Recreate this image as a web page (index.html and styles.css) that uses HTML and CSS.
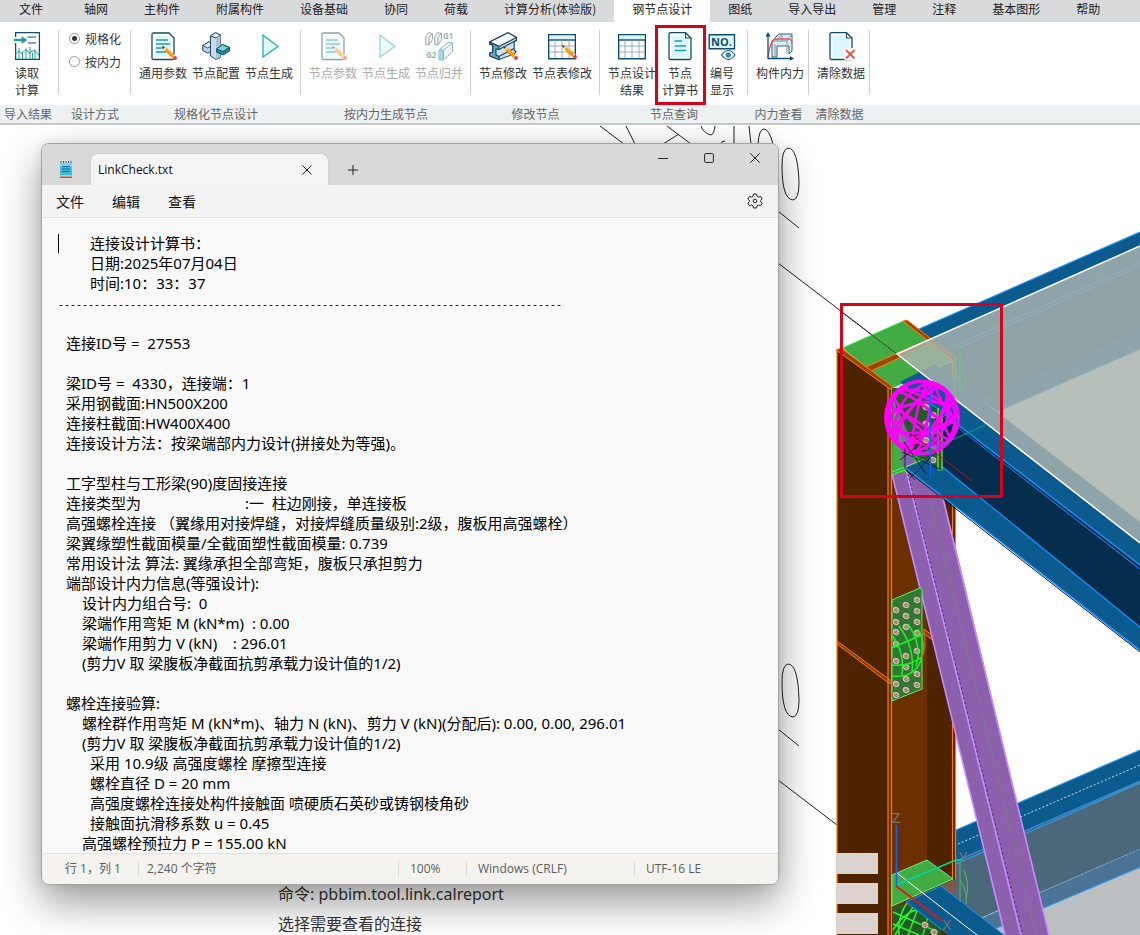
FILE: index.html
```html
<!DOCTYPE html>
<html lang="zh-CN">
<head>
<meta charset="utf-8">
<title>钢节点设计</title>
<link rel="stylesheet" href="styles.css">
</head>
<body>
<svg class="defs" aria-hidden="true">
  <defs>
    <g id="pencil">
      <path d="M12 15l4 1 8.500 7.500-2.700 3.200-8-8z" fill="#ffa31a"/>
      <path d="M14.500 18.500l7.500 7" stroke="#e07f00" stroke-width="1"/>
      <path d="M11 14l5 1.700-2.700 3.300z" fill="#f6d9ae"/>
      <path d="M11 14l3 1-1.800 2z" fill="#5a2a10"/>
      <path d="M23.500 22.500l-2.500 3 1 1 2.500-3z" fill="#e8eef2"/>
      <circle cx="24" cy="26" r="2" fill="#f0403c"/>
    </g>
    <g id="sheet">
      <path d="M3 2.500q0-1.500 1.500-1.500H20l5 5v20q0 1.500-1.500 1.500H4.500Q3 27.500 3 26z" fill="#fff" stroke="#0f4c6e" stroke-width="1.300"/>
      <path d="M6 4h12l4.500 4v17H6z" fill="#dcf7f9"/>
      <path d="M7 8h12M7 12h14M7 16h7M7 20h10" stroke="#1d9da6" stroke-width="1.300"/>
    </g>
    <g id="grid-sheet">
      <path d="M.7 2.700h26.600v24H.7z" fill="#fff" stroke="#0f4c6e" stroke-width="1.400"/>
      <path d="M1.500 3.500h25v4h-25z" fill="#d5f5f8"/>
      <path d="M.7 8h26.600" stroke="#0f4c6e" stroke-width="1.400"/>
      <path d="M7 8v18M14 8v18M21 8v18M1 14h26M1 20h26" stroke="#7f9db3" stroke-width=".8"/>
    </g>
    <g id="bolt">
      <ellipse rx="4" ry="3.600" fill="#c9bf9e" stroke="#2b3a22" stroke-width=".6" transform="rotate(25)"/>
      <path d="M-1.500 0q1-2 2.500-.7t0 2.200q-2 0-2.500-1.500" fill="none" stroke="#5d5644" stroke-width=".8"/>
    </g>
  </defs>
</svg>

<div class="app">
  <header>
    <nav class="tabs">
      <a class="tab tab-file" href="#">文件</a>
      <a class="tab" href="#">轴网</a>
      <a class="tab" href="#">主构件</a>
      <a class="tab" href="#">附属构件</a>
      <a class="tab" href="#">设备基础</a>
      <a class="tab" href="#">协同</a>
      <a class="tab" href="#">荷载</a>
      <a class="tab" href="#">计算分析(体验版)</a>
      <a class="tab active" href="#" aria-current="page">钢节点设计</a>
      <a class="tab" href="#">图纸</a>
      <a class="tab" href="#">导入导出</a>
      <a class="tab" href="#">管理</a>
      <a class="tab" href="#">注释</a>
      <a class="tab" href="#">基本图形</a>
      <a class="tab" href="#">帮助</a>
    </nav>

    <div class="ribbon">
      <section class="group group-import">
        <div class="tools">
          <button class="tool">
            <svg class="icon" viewBox="0 0 28 28"><path d="M2.600 5V.7h23.800v26.600H2.600V11" fill="#fff" stroke="#0f4c6e" stroke-width="1.300"/><path d="M1 8h8" stroke="#1d9da6" stroke-width="2.400"/><path d="M8.500 4.200l6 3.800-6 3.800z" fill="#1d9da6"/><path d="M14.500 5H23M15 11h8" stroke="#0f4c6e" stroke-width="1.200"/><path d="M2.600 22.500c2-4 5-4 6.400-.5 1.500-5 6-5 7.500 0 1.500-3.500 5.500-4.500 7.500-.5l2 1.500M6 16v11M13 16v11M17 15v12M22 17v10M9.500 20v7M19.500 21v6" fill="none" stroke="#1d9da6" stroke-width="1"/></svg>
            <span>读取<br>计算</span>
          </button>
        </div>
        <h2>导入结果</h2>
      </section>

      <section class="group">
        <div class="modes">
          <label><input type="radio" name="mode" checked>规格化</label>
          <label><input type="radio" name="mode">按内力</label>
        </div>
        <h2>设计方式</h2>
      </section>

      <section class="group">
        <div class="tools">
          <button class="tool"><svg class="icon" viewBox="0 0 28 28"><use href="#sheet"/><use href="#pencil" x="2"/></svg><span>通用参数</span></button>
          <button class="tool"><svg class="icon" viewBox="0 0 28 28" stroke="#2a4c70" stroke-width="1" stroke-linejoin="round"><path d="M.7 13.500l6-3.500 5 2v6l-6 3-5-2.500z" fill="#bcd3e4"/><path d="M.7 13.500l5 2.500 6-4-5-2z" fill="#eaf3f9"/><path d="M8.500 4l5-3.300L18.500 3v22.500l-4.500 2-5.500-3.500z" fill="#c7dbe8"/><path d="M8.500 4l5-3.300L18.500 3l-4.500 3z" fill="#e6f2f9"/><path d="M14 6.500v20.500l4.500-2V3.500z" fill="#a8c4d6" stroke="none"/><path d="M14.500 17l6-4.500 7 3V19l-6.500 4-6.500-3z" fill="#168e93" stroke="#0e5466"/><path d="M14.500 17l6-4.500 7 3-6.500 4z" fill="#7cd0d2" stroke="#0e5466"/></svg><span>节点配置</span></button>
          <button class="tool"><svg class="icon" viewBox="0 0 28 28"><path d="M8 3l15 11.500L8 25z" fill="#dff8fa" stroke="#2aa5b3" stroke-width="1.200"/></svg><span>节点生成</span></button>
        </div>
        <h2>规格化节点设计</h2>
      </section>

      <section class="group">
        <div class="tools">
          <button class="tool" disabled><svg class="icon" viewBox="0 0 28 28"><use href="#sheet"/><use href="#pencil" x="2"/></svg><span>节点参数</span></button>
          <button class="tool" disabled><svg class="icon" viewBox="0 0 28 28"><path d="M8 3l15 11.500L8 25z" fill="#dff8fa" stroke="#2aa5b3" stroke-width="1.200"/></svg><span>节点生成</span></button>
          <button class="tool" disabled><svg class="icon" viewBox="0 0 28 28"><g stroke="#456" stroke-width="1" stroke-linejoin="round"><path d="M.7 4.500L3.500.7l4 .8v6l-3.500 5.500-3.300-.5z" fill="#dde7ec"/><path d="M9.700 4.500L12.500.7l4 .8v6l-3.500 5.500-3.300-.5z" fill="#dde7ec"/><path d="M4 5l3.500-3.500M4 5v8M13 5l3.500-3.500M13 5v8" fill="none"/><path d="M14 18L23 10.500l4.500.5v8.500L18.500 28H14z" fill="#e1f3f5" stroke="#246a78"/><path d="M14 18h4.500v9.500H14z" fill="#39b9bc" stroke="none"/><path d="M14 18h4.500L27.500 11M18.500 18v9.500" fill="none" stroke="#246a78"/></g><text x="18" y="7" class="icon-tag">G1</text><text x="1" y="26" class="icon-tag">G2</text></svg><span>节点归并</span></button>
        </div>
        <h2>按内力生成节点</h2>
      </section>

      <section class="group">
        <div class="tools">
          <button class="tool"><svg class="icon" viewBox="0 0 28 28"><g stroke="#16405c" stroke-width="1.100" stroke-linejoin="round"><path d="M.6 10L19 .7l8.400 4.800v3l-2.200 1v9l2 1-2 2.500L10 27.500.8 24v-3l3-1v-7l-3-1z" fill="#cfe0ea"/><path d="M.6 10L19 .7l8.400 4.800L10 14.500z" fill="#f2fafd"/><path d="M.6 10l9.400 4.500v3l-3-.7v6.200l3 1.500v3L.8 24v-3l3-1v-7l-3.200-1z" fill="#5fa9b8"/><path d="M10 17.500l17-9M10 24.500l15-8" fill="none"/></g><use href="#pencil" x="3"/></svg><span>节点修改</span></button>
          <button class="tool"><svg class="icon" viewBox="0 0 28 28"><use href="#grid-sheet"/><use href="#pencil" x="3" y="-1"/></svg><span>节点表修改</span></button>
        </div>
        <h2>修改节点</h2>
      </section>

      <section class="group group-query">
        <div class="tools">
          <button class="tool"><svg class="icon" viewBox="0 0 28 28"><use href="#grid-sheet"/></svg><span>节点设计<br>结果</span></button>
          <button class="tool marked"><svg class="icon" viewBox="0 0 28 28"><path d="M3 2.500Q3 .7 4.500.7h15L25 6v20q0 1.500-1.500 1.500h-19Q3 27.500 3 26z" fill="#fff" stroke="#0f4c6e" stroke-width="1.300"/><path d="M5.500 3.500h12.500v4h4.500V25h-17z" fill="#dcf7f9"/><path d="M19.500.7V6H25" fill="none" stroke="#0f4c6e" stroke-width="1.200"/><path d="M8.500 9H16M9 14h11M9 18.500h11" stroke="#1d9da6" stroke-width="1.300"/></svg><span>节点<br>计算书</span></button>
          <button class="tool"><svg class="icon" viewBox="0 0 28 28"><path d="M1.200 2.700h25.300v14H1.200z" fill="#dff8fa" stroke="#0f4c6e" stroke-width="1.400"/><text x="3" y="14" class="icon-no">NO.</text><path d="M13.500 23q7-9 13.500 0-6.500 9-13.500 0z" fill="#fff" stroke="#0f6b84" stroke-width="1.200"/><circle cx="20.300" cy="23" r="2.300" fill="#1d9da6" stroke="#0f4c6e" stroke-width=".6"/></svg><span>编号<br>显示</span></button>
        </div>
        <h2>节点查询</h2>
      </section>

      <section class="group group-single">
        <div class="tools">
          <button class="tool"><svg class="icon" viewBox="0 0 28 28"><path d="M6 9l7-7h13v17l-3 3v-8H11v11H6z" fill="#dcecf3" stroke="#34607c" stroke-width="1"/><path d="M6 9h15l5-7M21 9v13M11 9l5-7v7M9 12v12" fill="none" stroke="#6990a8" stroke-width=".9"/><path d="M2 25C4 12 6 7 10 7h13q3 1 3 5" fill="none" stroke="#ef5350" stroke-width="1.300"/><path d="M2 27V2.500M2 26.500h24" fill="none" stroke="#0f4c6e" stroke-width="1.300"/><path d="M-.5 4.500L2 0l2.500 4.500zM24 24l4 2.500-4 2.200z" fill="#0f4c6e"/></svg><span>构件内力</span></button>
        </div>
        <h2>内力查看</h2>
      </section>

      <section class="group group-single">
        <div class="tools">
          <button class="tool"><svg class="icon" viewBox="0 0 28 28"><path d="M3 2.500Q3 .7 4.500.7h15L25 6v20q0 1.500-1.500 1.500h-19Q3 27.500 3 26z" fill="#fff" stroke="#0f4c6e" stroke-width="1.300"/><path d="M5.500 3.500h12.500v4h4.500V25h-17z" fill="#dcf7f9"/><path d="M19.500.7V6H25" fill="none" stroke="#0f4c6e" stroke-width="1.200"/><path d="M17.500 16h11v12h-11z" fill="#fff"/><path d="M19 18l8.500 8.500M27.500 18L19 26.500" stroke="#ef5350" stroke-width="2"/></svg><span>清除数据</span></button>
        </div>
        <h2>清除数据</h2>
      </section>
      <div class="group-rest"></div>
    </div>
  </header>

  <main class="workspace">
    <svg class="scene" viewBox="0 125 1140 810" preserveAspectRatio="xMaxYMin slice" role="img" aria-label="节点三维模型">
      <g fill="none" stroke="#222" stroke-width="1">
        <path d="M600 126l24 18M626 126l9 18M667 126l24 18M663 144l16-10M701 126q2 7 10 9 3-1 4-9M734 126v18M749 126l2 18M758 144q1-15 6-15 5 0 9 15M721 144q0-3 4-3"/>
        <path d="M788 148q-6 1-6 18 0 33 11 34 6-1 6-17-1-35-11-35zM788 664q-6 1-6 18 0 34 11 35 6-1 6-17-1-36-11-36z"/>
        <path d="M778 211l21 17M778 263l119 91M778 729l21 17M778 780l59 45"/>
      </g>

      <!-- rear beam at the upper joint -->
      <path d="M919 329l221-97v117l-142 63-63-48z" fill="#0b5b8f"/>
      <path d="M952 349l188-85v68l-160 70-38-30z" fill="#0a4d78"/>
      <path d="M919 329l221-97M952 347l188-84M954 350l186-84M998 411l142-62" fill="none" stroke="#1e90ee" stroke-width="1.200"/>
      <path d="M980 402l160-70" stroke="#1e90ee" stroke-dasharray="2 2"/>

      <!-- rear beam at the lower joint -->
      <path d="M980 935l160-69v69z" fill="#bcbfc2"/>
      <path d="M956 830l184-80v32l-184 81z" fill="#0b5b8f"/>
      <path d="M956 862l184-80v67l-157 68-27 18z" fill="#4b687a"/>
      <path d="M975 921l165-72v18l-160 68h-24z" fill="#4a7394"/>
      <path d="M956 830l184-80M956 864l184-81M956 861l184-80M980 935l160-68" fill="none" stroke="#3495dc" stroke-width="1.200"/>
      <path d="M958 844l182-79" stroke="#cfe0ea" stroke-dasharray="2 2"/>
      <path d="M975 921l165-72" stroke="#60a8dc" stroke-dasharray="2 2"/>
      <path d="M960 862v60M964 870q6 15 2 28M960 880q8 12 6 24" fill="none" stroke="#55b86a"/>

      <!-- column -->
      <path d="M837 350l53 39v546h-53z" fill="#4d2300"/>
      <path d="M888 388h5v547h-5z" fill="#6b3000"/>
      <path d="M892 388h35v547h-35z" fill="#6b2f00"/>
      <path d="M927 380h28v555h-28z" fill="#4d2300"/>
      <path d="M837 641l53 39v4l-53-40zM924 629l9 7v4l-9-6z" fill="#8a3c00" stroke="#ff7a0a"/>
      <path d="M837 350v585M888 388v547M891.500 388v547M952.500 362v573M955.500 362v573" stroke="#ff7a0a" stroke-width="1.200"/>
      <path d="M842 348l61-27 52 39-62 28z" fill="#43ab43" stroke="#66f56c"/>
      <path d="M866 367l59-26 4 3-58 27z" fill="#9b4400" stroke="#ff7a0a"/>
      <path d="M836 350l5-2 52 39-3 2z" fill="#a04200" stroke="#ff7a0a"/>
      <path d="M903 321l4-1 50 39-3 2z" fill="#a04200" stroke="#ff7a0a"/>
      <path d="M840 311l57 43" stroke="#222" stroke-dasharray="2 1"/>

      <!-- brace -->
      <path d="M892 388h50v88l-50-4z" fill="#235b24"/>
      <path d="M893 395l14 55 30 20-45 4z" fill="#43ab43"/>
      <path d="M897 400l12 22 6 46h-12z" fill="#8d60ad"/>
      <path d="M892 474l45-4 4 16 108 449h-44z" fill="#8d60ad"/>
      <path d="M892 474l113 461M906 470l115 465M937 474l112 461" fill="none" stroke="#c78bff" stroke-width="1.600"/>
      <path d="M908 474l115 461" stroke="#472768" stroke-dasharray="2 3"/>
      <path d="M924 474l112 461" stroke="#7c7c86" stroke-width="1.200" stroke-dasharray="4 1"/>
      <path d="M892 472l46-18M892 475l46-18" stroke="#5af461"/>

      <!-- front beam -->
      <path d="M900 382l35-18 205 158v45L958 427z" fill="#0b5b8f"/>
      <path d="M943 415l197 151v62L943 470z" fill="#052e4e"/>
      <path d="M906 468l24-11 210 170v24z" fill="#0b5b8f"/>
      <path d="M930 403l210 162M928 404l212 165M906 468l234 182M930 457l210 170" fill="none" stroke="#1e90ff" stroke-width="1.200"/>
      <path d="M906 470l234 182M930 405l210 163" fill="none" stroke="#031c32"/>
      <path d="M898 410l14-18 30 20v58l-4-2-20-12z" fill="#235b24"/>
      <path d="M938 408v61M942 410v60h-4" fill="none" stroke="#66f56c" stroke-width="1.200"/>
      <use href="#bolt" x="926" y="407"/><use href="#bolt" x="933" y="415"/><use href="#bolt" x="926" y="424"/><use href="#bolt" x="933" y="431"/><use href="#bolt" x="926" y="440"/><use href="#bolt" x="933" y="448"/><use href="#bolt" x="933" y="460"/>

      <!-- floor slab -->
      <path d="M897 354l243-108v297z" fill="#a9b3ae" fill-opacity=".84"/>
      <path d="M954 350v48M960 346v42M958 362q9 14 7 29M952 366q8 13 11 28" fill="none" stroke="#7cc48a" stroke-opacity=".6" stroke-width="1.400"/>
      <path d="M1140 246L897 354l243 189" fill="none" stroke="#fff" stroke-width="1.500"/>

      <!-- selected joint marker -->
      <g fill="none" stroke="#f0f" stroke-width="2.600">
        <circle cx="922" cy="417.500" r="36.500" stroke-width="3"/>
        <ellipse cx="922" cy="417.500" rx="33" ry="36"/>
        <ellipse cx="922" cy="417.500" rx="14" ry="36" transform="rotate(38 922 417.500)"/>
        <ellipse cx="922" cy="417.500" rx="24" ry="36" transform="rotate(28 922 417.500)"/>
        <ellipse cx="922" cy="417.500" rx="10" ry="36" transform="rotate(-48 922 417.500)"/>
        <ellipse cx="922" cy="417.500" rx="24" ry="36" transform="rotate(-58 922 417.500)"/>
        <ellipse cx="922" cy="417.500" rx="15" ry="35" transform="rotate(82 922 417.500)"/>
        <ellipse cx="922" cy="417.500" rx="6" ry="36" transform="rotate(12 922 417.500)"/>
        <path d="M889 405l58 34M902 388l44 18-20 44M891 431l42-48 18 38-50 24"/>
      </g>
      <path d="M904 442l22 32M900 460l20-16M910 478l20-20M902 452l40 18M905 448v20l10 12" fill="none" stroke="#111" stroke-width=".8"/>
      <path d="M904 462l81-37" stroke="#0b9b98"/>
      <path d="M910 433l62 48" stroke="#b3151b"/>
      <path d="M930.500 394v84" stroke="#0f62ff" stroke-width="1.300"/>

      <!-- gusset plate on the column -->
      <path d="M892 600l28-12 2 2v99l-30 12z" fill="#2f7a33" stroke="#5af461"/>
      <g>
        <use href="#bolt" x="896" y="610"/><use href="#bolt" x="906" y="605"/><use href="#bolt" x="917" y="600"/>
        <use href="#bolt" x="896" y="622"/><use href="#bolt" x="906" y="616"/><use href="#bolt" x="917" y="611"/>
        <use href="#bolt" x="896" y="632"/><use href="#bolt" x="906" y="627"/><use href="#bolt" x="917" y="622"/>
        <use href="#bolt" x="896" y="644"/><use href="#bolt" x="917" y="633"/><use href="#bolt" x="896" y="661"/>
        <use href="#bolt" x="906" y="656"/><use href="#bolt" x="917" y="651"/><use href="#bolt" x="906" y="667"/>
        <use href="#bolt" x="896" y="684"/><use href="#bolt" x="906" y="679"/><use href="#bolt" x="917" y="674"/>
        <use href="#bolt" x="896" y="695"/><use href="#bolt" x="906" y="690"/><use href="#bolt" x="917" y="685"/>
      </g>
      <path d="M892 635q13 18 10 40M899 626q16 22 13 46M908 624q15 22 8 42M892 648l32-14M892 665q18 2 31-9M892 676q24 3 30-19 4-14-4-28" fill="none" stroke="#22ee2c" stroke-width="1.500"/>
      <path d="M923 632q4 13-1 26" fill="none" stroke="#b96b00" stroke-width="1.500"/>

      <!-- lower joint -->
      <path d="M893 905h48v30h-48z" fill="#235b24"/>
      <path d="M893 912l45 20M895 935l20-31M893 924l26 11M907 903q-10 14-8 32M918 908l-10 27M930 908l-7 27M893 930q10-17 26-21" fill="none" stroke="#2ef034" stroke-width="1.500"/>
      <path d="M892 875l35-15 26 19-61 27z" fill="#43ab43" stroke="#66f56c"/>
      <use href="#bolt" x="925" y="925"/><use href="#bolt" x="934" y="932"/>
      <path d="M938 886l18-7v20z" fill="#7b5a4b"/>
      <path d="M906 902l35-16 63 49h-54z" fill="#0b5b8f"/>
      <path d="M941 886l63 49M906 902l43 33M906 902l35-16" fill="none" stroke="#1e90ff"/>
      <path d="M897 873l80 62" stroke="#fff" stroke-width="1"/>
      <path d="M896 885l60-25h7" fill="none" stroke="#00d7a5" stroke-width="1.600"/>
      <path d="M896 886l46 35" stroke="#f01010" stroke-width="1.600"/>
      <path d="M896.500 825v61" stroke="#0f62ff" stroke-width="1.600"/>
      <text class="axis" x="896" y="823">Z</text><text class="axis" x="963" y="862">Y</text><text class="axis" x="947" y="930">X</text>

      <path d="M836 853h42v21h-42zM836 883h42v21h-42zM836 913h42v21h-42z" fill="#dcd3cf"/>
      <path d="M841.500 304.500h160v192h-160z" fill="none" stroke="#d9001b" stroke-width="3"/>
    </svg>

    <div class="command">
      <p>命令: pbbim.tool.link.calreport</p>
      <p>选择需要查看的连接</p>
    </div>

    <section class="notepad" aria-label="LinkCheck.txt">
      <div class="titlebar">
        <svg class="app-icon" viewBox="0 0 14 17"><path d="M1 2h12v13H1z" fill="#43bbdd"/><path d="M1 2h12v4H1z" fill="#75d8f0"/><path d="M2 0v2M4.500 0v2M7 0v2M9.500 0v2M12 0v2" stroke="#175c84" stroke-width="1"/><path d="M3 5.500h8M3 8h8M3 10.500h8" stroke="#0f6f9f" stroke-width="1"/><path d="M1 14.500h12v1H1z" fill="#eee"/><path d="M1 15.500h12V17H1z" fill="#a85a1c"/></svg>
        <div class="doc-tab">
          <span>LinkCheck.txt</span>
          <button class="plain" aria-label="关闭标签"><svg viewBox="0 0 10 10"><path d="M.5.5l9 9M9.500.5l-9 9"/></svg></button>
        </div>
        <button class="plain new-tab" aria-label="新建标签"><svg viewBox="0 0 10 10"><path d="M5 0v10M0 5h10"/></svg></button>
        <div class="window-buttons">
          <button class="plain" aria-label="最小化"><svg viewBox="0 0 10 10"><path d="M0 5.500h10"/></svg></button>
          <button class="plain" aria-label="最大化"><svg viewBox="0 0 10 10"><rect x=".6" y=".6" width="8.800" height="8.800" rx="1"/></svg></button>
          <button class="plain" aria-label="关闭"><svg viewBox="0 0 10 10"><path d="M.3.3l9.400 9.400M9.700.3L.3 9.700"/></svg></button>
        </div>
      </div>
      <div class="menubar">
        <button class="menu">文件</button>
        <button class="menu">编辑</button>
        <button class="menu">查看</button>
        <button class="plain settings" aria-label="设置"><svg viewBox="0 0 16 16"><path d="M6.500 1h3l.5 2.200 1.500.9 2.200-.7 1.500 2.600L13.600 7.500v1.200l1.600 1.400-1.500 2.600-2.200-.7-1.500.9-.5 2.100h-3L6 12.900l-1.500-.9-2.200.7-1.500-2.600 1.600-1.400V7.500L.8 6l1.500-2.600 2.200.7L6 3.200z"/><circle cx="8" cy="8" r="1.800"/></svg></button>
      </div>
      <div class="editor" contenteditable="true" role="textbox" aria-multiline="true" aria-label="文档内容" spellcheck="false">
        <div class="in-4 caret">连接设计计算书：</div>
        <div class="in-4">日期:2025年07月04日</div>
        <div class="in-4">时间:10：33：37</div>
        <div class="rule">------------------------------------------------------------------------------------</div>
        <div><br></div>
        <div class="in-1">连接ID号 =&nbsp; 27553</div>
        <div><br></div>
        <div class="in-1">梁ID号 =&nbsp; 4330，连接端：1</div>
        <div class="in-1">采用钢截面:HN500X200</div>
        <div class="in-1">连接柱截面:HW400X400</div>
        <div class="in-1">连接设计方法：按梁端部内力设计(拼接处为等强)。</div>
        <div><br></div>
        <div class="in-1">工字型柱与工形梁(90)度固接连接</div>
        <div class="in-1"><span class="field">连接类型为</span>:一&nbsp; 柱边刚接，单连接板</div>
        <div class="in-1">高强螺栓连接 （翼缘用对接焊缝，对接焊缝质量级别:2级，腹板用高强螺栓）</div>
        <div class="in-1">梁翼缘塑性截面模量/全截面塑性截面模量: 0.739</div>
        <div class="in-1">常用设计法 算法: 翼缘承担全部弯矩，腹板只承担剪力</div>
        <div class="in-1">端部设计内力信息(等强设计):</div>
        <div class="in-3">设计内力组合号:&nbsp; 0</div>
        <div class="in-3">梁端作用弯矩 M (kN*m)&nbsp; : 0.00</div>
        <div class="in-3">梁端作用剪力 V (kN)&nbsp; &nbsp; : 296.01</div>
        <div class="in-3">(剪力V 取 梁腹板净截面抗剪承载力设计值的1/2)</div>
        <div><br></div>
        <div class="in-1">螺栓连接验算:</div>
        <div class="in-3">螺栓群作用弯矩 M (kN*m)、轴力 N (kN)、剪力 V (kN)(分配后): 0.00, 0.00, 296.01</div>
        <div class="in-3">(剪力V 取 梁腹板净截面抗剪承载力设计值的1/2)</div>
        <div class="in-4">采用 10.9级 高强度螺栓 摩擦型连接</div>
        <div class="in-4">螺栓直径 D = 20 mm</div>
        <div class="in-4">高强度螺栓连接处构件接触面 喷硬质石英砂或铸钢棱角砂</div>
        <div class="in-4">接触面抗滑移系数 u = 0.45</div>
        <div class="in-3">高强螺栓预拉力 P = 155.00 kN</div>
      </div>
      <footer class="status">
        <span>行 1，列 1</span>
        <span>2,240 个字符</span>
        <span>100%</span>
        <span>Windows (CRLF)</span>
        <span>UTF-16 LE</span>
      </footer>
    </section>
  </main>
</div>
</body>
</html>
```

FILE: styles.css
```css
* { box-sizing: border-box; }

body {
  margin: 0;
  font: 12px/17px "Noto Sans CJK SC", sans-serif;
  color: #333;
  background: #fff;
}

.defs { position: absolute; width: 0; height: 0; }
button { font: inherit; color: inherit; background: none; border: 0; padding: 0; }
.app { display: flex; flex-direction: column; height: 100vh; overflow: hidden; }

/* ribbon */
.tabs { display: flex; height: 22px; background: #d9dadc; white-space: nowrap; }
.tab { padding: 0 18px; color: #222; text-decoration: none; line-height: 18px; }
.tab-file { padding-left: 19px; padding-right: 23px; }
.tab.active { background: #fff; }

.ribbon {
  display: grid;
  grid-template-columns: 59px 72px 170px 170px 129px 148px 61px 61px 1fr;
  height: 103px;
  border-bottom: 2px solid #c6c8ca;
}
.group { display: flex; flex-direction: column; position: relative; }
.group::after {
  content: "";
  position: absolute;
  top: 8px;
  right: 0;
  width: 1px;
  height: 65px;
  background: #d0d0d0;
}
.group h2, .group-rest {
  margin: 0;
  height: 18px;
  background: #edf1f2;
  color: #666;
  font-size: 12px;
  font-weight: 400;
  line-height: 18px;
  text-align: center;
  white-space: nowrap;
}
.group-rest { align-self: end; }
.group-import h2 { padding-right: 3px; }
.tools { flex: 1; display: flex; justify-content: center; gap: 5px; padding-top: 10px; }
.group-import .tools { padding-right: 5px; }
.group-single .tools { padding-left: 3px; }
.group-query .tools { justify-content: flex-start; gap: 6px; padding-left: 8px; }
.group-query .tool:last-child { margin-left: 4px; }
.tool { display: flex; flex-direction: column; align-items: center; gap: 4px; height: 67px; white-space: nowrap; position: relative; }
.tool:disabled { color: #aaa; }
.tool:disabled .icon { opacity: .5; }
.icon { width: 28px; height: 28px; overflow: visible; }
.icon-tag { font: 700 8px "Open Sans", sans-serif; fill: #246a78; }
.icon-no { font: 700 11px "Open Sans", sans-serif; fill: #0f4c6e; }
.marked::after {
  content: "";
  position: absolute;
  inset: -7px -8px -6px -7px;
  border: 3px solid #d9001b;
}
.modes { flex: 1; display: flex; flex-direction: column; gap: 6px; padding: 8px 0 0 10px; }
.modes label { display: flex; align-items: center; gap: 5px; }
.modes input {
  appearance: none;
  width: 11px;
  height: 11px;
  margin: 0;
  border: 1px solid #999;
  border-radius: 50%;
  background: #fff;
}
.modes input:checked { background: radial-gradient(circle, #333 0 2px, #fff 3px); }

/* model view */
.workspace { flex: 1; position: relative; min-height: 0; overflow: hidden; }
.scene { display: block; width: 100%; height: 100%; }
.axis { font: 15px "Noto Sans", sans-serif; fill: #777; text-anchor: middle; }
.command {
  position: absolute;
  left: 278px;
  bottom: -4px;
  font: 16px/30px "Noto Sans", "Noto Sans CJK SC", sans-serif;
}
.command p { margin: 0; }

/* notepad window */
.notepad {
  position: absolute;
  inset: 18px 361px 50px 41px;
  display: flex;
  flex-direction: column;
  border: 1px solid #a2a2a2;
  border-radius: 8px;
  overflow: hidden;
  background: #f9f9f9;
  color: #111;
  box-shadow: 0 17px 40px rgba(0, 0, 0, .4), 0 0 12px rgba(0, 0, 0, .08);
  font-family: "Open Sans", "Noto Sans CJK SC", sans-serif;
}
.plain { display: grid; place-items: center; }
.plain svg { width: 10px; height: 10px; fill: none; stroke: #222; stroke-width: 1; overflow: visible; }
.titlebar { display: flex; height: 41px; background: #dad9d9; }
.app-icon { width: 14px; height: 17px; margin: 17px 17px 0; }
.doc-tab {
  display: flex;
  justify-content: space-between;
  align-items: center;
  width: 239px;
  margin-top: 9px;
  padding: 0 16px 0 7px;
  border: 1px solid #cfcfcf;
  border-bottom: 0;
  border-radius: 8px 8px 0 0;
  background: #f4f4f4;
}
.new-tab { width: 48px; padding-top: 10px; }
.window-buttons { display: flex; margin-left: auto; height: 28px; }
.window-buttons .plain { width: 46px; }
.menubar {
  display: flex;
  height: 33px;
  padding: 0 15px 0 14px;
  gap: 28px;
  background: #f4f3f3;
  border-bottom: 1px solid #e4e4e4;
}
.menu { font-size: 14px; }
.settings { margin-left: auto; }
.settings svg { width: 16px; height: 16px; }
.editor {
  flex: 1;
  min-height: 0;
  overflow: hidden;
  padding: 15px 16px 0;
  outline: 0;
  font: 15px/20px "Noto Sans", "Noto Sans CJK SC", sans-serif;
  color: #000;
  white-space: nowrap;
}
.in-1 { padding-left: 8px; }
.in-3 { padding-left: 24px; }
.in-4 { padding-left: 32px; }
.caret { background: linear-gradient(#000, #000) 0 100% / 1px 19px no-repeat; }
.rule { height: 20px; font: 10px/26px "Liberation Mono", monospace; }
.field { display: inline-block; width: 179px; }
.status {
  display: grid;
  grid-template-columns: 96px 260px 68px 168px 1fr;
  align-items: center;
  height: 31px;
  flex: none;
  border-top: 1px solid #e4e1de;
  background: #f5f3f0;
  color: #5c5c5c;
}
.status span { padding-left: 11px; border-left: 1px solid #dedbd8; line-height: 16px; white-space: nowrap; }
.status span:first-child { padding-left: 23px; border-left: 0; }
.status span:nth-child(2) { padding-left: 8px; }
```
